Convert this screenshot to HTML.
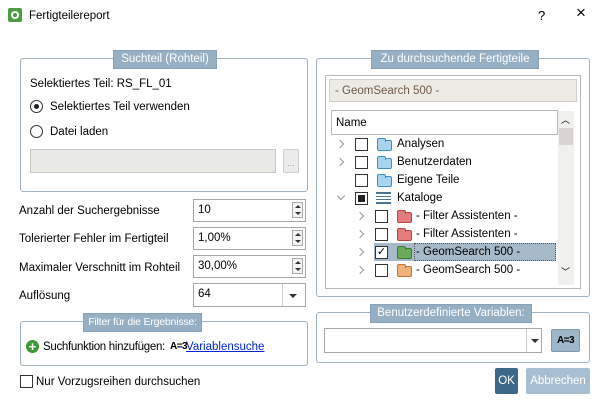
<!DOCTYPE html>
<html><head><meta charset="utf-8"><style>
*{box-sizing:border-box;margin:0;padding:0}
body{width:610px;height:411px;background:#fff;font-family:"Liberation Sans",sans-serif;font-size:11.5px;color:#000;position:relative;overflow:hidden}
.a{position:absolute}
.grp{position:absolute;border:1px solid #9fb3c4;border-radius:3px}
.leg{position:absolute;background:#97afc3;color:#fff;text-align:center;font-size:11.5px;line-height:17px;border:1px solid #8aa2b7;white-space:nowrap;overflow:hidden}
.t{position:absolute;white-space:nowrap;line-height:14px}
.inp{position:absolute;border:1px solid #a8a8a8;background:#fff;padding-left:4px;line-height:20px}
.spin{position:absolute;right:2px;top:2px;width:11px;height:16px;border:1px solid #aaa;background:#f4f4f4}
.spin:before{content:"";position:absolute;left:2px;top:2px;border:3px solid transparent;border-bottom:3px solid #333;border-top:0}
.spin:after{content:"";position:absolute;left:2px;bottom:2px;border:3px solid transparent;border-top:3px solid #333;border-bottom:0}
.cb{position:absolute;width:13px;height:13px;border:1px solid #333;background:#fff}
.arr{position:absolute;width:6px;height:6px;border-right:1.3px solid #999;border-top:1.3px solid #999;transform:rotate(45deg)}
.fold{position:absolute;width:15px;height:11px;border-radius:2px}
.fold:before{content:"";position:absolute;left:-1px;top:-3px;width:7px;height:3px;border-radius:2px 2px 0 0;background:inherit;border:inherit;border-bottom:0}
.dd{position:absolute;width:0;height:0;border:4px solid transparent;border-top:4px solid #333}
</style></head><body>
<div class="a" style="left:8px;top:8px;width:14px;height:14px;background:#4f9a45;border-radius:2px"><div class="a" style="left:3px;top:3px;width:8px;height:8px;border:2px solid #fff;border-radius:50%"></div></div>
<div class="t" style="left:29px;top:9px">Fertigteilereport</div>
<div class="t" style="left:538px;top:9px;font-size:13px">?</div>
<div class="t" style="left:576px;top:6px;font-size:17px">×</div>

<div class="grp" style="left:20px;top:58px;width:288px;height:134px"></div>
<div class="leg" style="left:113px;top:50px;width:104px">Suchteil (Rohteil)</div>
<div class="t" style="left:30px;top:77px">Selektiertes Teil: RS_FL_01</div>
<div class="a" style="left:30px;top:100px;width:13px;height:13px;border:1px solid #333;border-radius:50%"><div class="a" style="left:3px;top:3px;width:5px;height:5px;background:#222;border-radius:50%"></div></div>
<div class="t" style="left:50px;top:100px">Selektiertes Teil verwenden</div>
<div class="a" style="left:30px;top:125px;width:13px;height:13px;border:1px solid #333;border-radius:50%"></div>
<div class="t" style="left:50px;top:125px">Datei laden</div>
<div class="a" style="left:30px;top:149px;width:246px;height:24px;background:#e9e9e5;border:1px solid #c8c8c8"></div>
<div class="a" style="left:283px;top:149px;width:16px;height:24px;background:#ececec;border:1px solid #cfcfcf;border-radius:2px;color:#999;font-size:9px;text-align:center;line-height:26px">...</div>

<div class="t" style="left:19px;top:204px">Anzahl der Suchergebnisse</div>
<div class="inp" style="left:193px;top:199px;width:113px;height:23px">10<div class="spin"></div></div>
<div class="t" style="left:19px;top:232px">Tolerierter Fehler im Fertigteil</div>
<div class="inp" style="left:193px;top:227px;width:113px;height:23px">1,00%<div class="spin"></div></div>
<div class="t" style="left:19px;top:261px">Maximaler Verschnitt im Rohteil</div>
<div class="inp" style="left:193px;top:255px;width:113px;height:23px">30,00%<div class="spin"></div></div>
<div class="t" style="left:19px;top:289px">Auflösung</div>
<div class="inp" style="left:193px;top:283px;width:113px;height:24px">64<div class="a" style="left:88px;top:0;width:1px;height:22px;background:#ccc"></div><div class="dd" style="left:95px;top:10px"></div></div>

<div class="grp" style="left:20px;top:321px;width:288px;height:45px"></div>
<div class="leg" style="left:83px;top:313px;width:119px;font-size:10.5px;letter-spacing:-0.2px">Filter für die Ergebnisse:</div>
<div class="a" style="left:26px;top:340px;width:13px;height:13px;border-radius:50%;background:#3e9a36;color:#fff;font-size:13px;font-weight:bold;line-height:13px;text-align:center">+</div>
<div class="t" style="left:43px;top:340px;letter-spacing:-0.3px">Suchfunktion hinzufügen:</div>
<div class="t" style="left:170px;top:340px;font-size:10px;font-weight:bold;letter-spacing:-0.5px">A=3</div>
<div class="t" style="left:186px;top:340px;color:#0026d6;text-decoration:underline">Variablensuche</div>

<div class="cb" style="left:20px;top:375px"></div>
<div class="t" style="left:36px;top:375px">Nur Vorzugsreihen durchsuchen</div>

<div class="grp" style="left:316px;top:58px;width:274px;height:239px"></div>
<div class="leg" style="left:371px;top:50px;width:168px">Zu durchsuchende Fertigteile</div>
<div class="a" style="left:325px;top:75px;width:256px;height:214px;border:1px solid #b8b8b8"></div>
<div class="a" style="left:329px;top:79px;width:248px;height:23px;background:#ecebe6;border:1px solid #cfcfc8"></div>
<div class="t" style="left:335px;top:84px;color:#6e5a4a">- GeomSearch 500 -</div>
<div class="a" style="left:331px;top:110px;width:227px;height:25px;border:1px solid #bbb;background:#fff"></div>
<div class="t" style="left:336px;top:116px">Name</div>
<div class="a" style="left:558px;top:111px;width:16px;height:174px;background:#f0f0ee"></div>
<div class="a" style="left:559px;top:128px;width:14px;height:17px;background:#dbd4d4"></div>
<div class="t" style="left:561px;top:113px;font-size:9px">︿</div>
<div class="t" style="left:561px;top:265px;font-size:9px">﹀</div>

<div class="a" style="left:374px;top:243px;width:182px;height:18px;background:#a7bac9"></div>
<div class="a" style="left:414px;top:243px;width:142px;height:18px;border:1px dotted #555"></div>

<div class="arr" style="left:337px;top:141px"></div><div class="cb" style="left:355px;top:138px"></div><div class="fold" style="left:377px;top:140px;background:#a8d4ef;border:1px solid #3f8fc6"></div><div class="t" style="left:397px;top:137px">Analysen</div>
<div class="arr" style="left:337px;top:159px"></div><div class="cb" style="left:355px;top:156px"></div><div class="fold" style="left:377px;top:158px;background:#a8d4ef;border:1px solid #3f8fc6"></div><div class="t" style="left:397px;top:155px">Benutzerdaten</div>
<div class="cb" style="left:355px;top:174px"></div><div class="fold" style="left:377px;top:176px;background:#a8d4ef;border:1px solid #3f8fc6"></div><div class="t" style="left:397px;top:173px">Eigene Teile</div>
<div class="arr" style="left:338px;top:193px;transform:rotate(135deg)"></div><div class="cb" style="left:355px;top:192px"><div class="a" style="left:2px;top:2px;width:7px;height:7px;background:#222"></div></div><div class="a" style="left:376px;top:192px;width:15px;height:12px;border:2px solid #4b7590;border-left:0;border-right:0;background:repeating-linear-gradient(#fff 0 2px,#4b7590 2px 3px)"></div><div class="t" style="left:397px;top:191px">Kataloge</div>
<div class="arr" style="left:357px;top:213px"></div><div class="cb" style="left:375px;top:210px"></div><div class="fold" style="left:397px;top:212px;background:#e37c7c;border:1px solid #b44"></div><div class="t" style="left:416px;top:209px">- Filter Assistenten -</div>
<div class="arr" style="left:357px;top:231px"></div><div class="cb" style="left:375px;top:228px"></div><div class="fold" style="left:397px;top:230px;background:#e37c7c;border:1px solid #b44"></div><div class="t" style="left:416px;top:227px">- Filter Assistenten -</div>
<div class="arr" style="left:357px;top:249px"></div><div class="cb" style="left:375px;top:246px;font-size:11px;line-height:11px;text-align:center">✓</div><div class="fold" style="left:397px;top:248px;background:#6aa95c;border:1px solid #3b7a30"></div><div class="t" style="left:416px;top:245px">- GeomSearch 500 -</div>
<div class="arr" style="left:357px;top:267px"></div><div class="cb" style="left:375px;top:264px"></div><div class="fold" style="left:397px;top:266px;background:#f0b27a;border:1px solid #c0783a"></div><div class="t" style="left:416px;top:263px">- GeomSearch 500 -</div>

<div class="grp" style="left:316px;top:312px;width:274px;height:51px"></div>
<div class="leg" style="left:370px;top:304px;width:162px">Benutzerdefinierte Variablen:</div>
<div class="inp" style="left:324px;top:328px;width:218px;height:25px"><div class="a" style="left:201px;top:0;width:1px;height:23px;background:#ccc"></div><div class="dd" style="left:206px;top:10px"></div></div>
<div class="a" style="left:551px;top:329px;width:29px;height:23px;background:#9eb6c9;border:1px solid #7e98ad;border-radius:2px;font-size:10px;font-weight:bold;text-align:center;line-height:21px;letter-spacing:-0.5px">A=3</div>

<div class="a" style="left:495px;top:368px;width:23px;height:26px;background:#3d6887;border-radius:2px;color:#fff;text-align:center;line-height:26px">OK</div>
<div class="a" style="left:526px;top:368px;width:64px;height:26px;background:#a8bfd1;border-radius:2px;color:#fff;text-align:center;line-height:26px">Abbrechen</div>
</body></html>
